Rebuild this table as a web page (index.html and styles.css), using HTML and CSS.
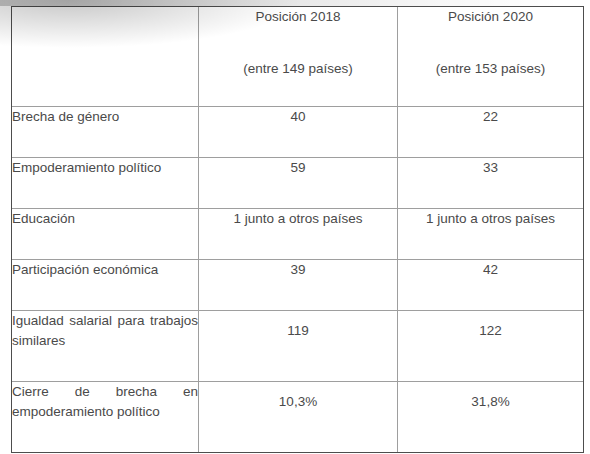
FILE: index.html
```html
<!DOCTYPE html>
<html lang="es">
<head>
<meta charset="utf-8">
<title>Tabla</title>
<link rel="stylesheet" href="styles.css">
</head>
<body>
<div class="page">
  <table class="data">
    <colgroup>
      <col class="c1"><col class="c2"><col class="c3">
    </colgroup>
    <tr class="head">
      <td class="label"></td>
      <td class="num"><p class="h1">Posición 2018</p><p class="h2">(entre 149 países)</p></td>
      <td class="num"><p class="h1">Posición 2020</p><p class="h2">(entre 153 países)</p></td>
    </tr>
    <tr>
      <td class="label"><p>Brecha de género</p></td>
      <td class="num"><p>40</p></td>
      <td class="num"><p>22</p></td>
    </tr>
    <tr>
      <td class="label"><p>Empoderamiento político</p></td>
      <td class="num"><p>59</p></td>
      <td class="num"><p>33</p></td>
    </tr>
    <tr>
      <td class="label"><p>Educación</p></td>
      <td class="num"><p>1 junto a otros países</p></td>
      <td class="num"><p>1 junto a otros países</p></td>
    </tr>
    <tr>
      <td class="label"><p>Participación económica</p></td>
      <td class="num"><p>39</p></td>
      <td class="num"><p>42</p></td>
    </tr>
    <tr>
      <td class="label"><p>Igualdad salarial para trabajos similares</p></td>
      <td class="num"><p>119</p></td>
      <td class="num"><p>122</p></td>
    </tr>
    <tr class="last">
      <td class="label"><p>Cierre de brecha en empoderamiento político</p></td>
      <td class="num"><p>10,3%</p></td>
      <td class="num"><p>31,8%</p></td>
    </tr>
  </table>
  <div class="shade"></div>
</div>
</body>
</html>
```
FILE: styles.css
```css
html, body {
  margin: 0;
  padding: 0;
  background: #fff;
}
.page {
  position: relative;
  width: 590px;
  height: 454px;
  overflow: hidden;
  padding: 6px 0 0 11px;
  box-sizing: border-box;
}
.data {
  border-collapse: separate;
  border-spacing: 0;
  border: 1px solid #4d4d4d;
  table-layout: fixed;
  width: 573px;
  font-family: "Liberation Sans", Arial, sans-serif;
  font-size: 13.5px;
  color: #4a4a4a;
}
.c1 { width: 187px; }
.c2 { width: 199px; }
.c3 { width: 185px; }
.data td {
  padding: 0;
  vertical-align: middle;
  border-right: 1px solid #9e9e9e;
  border-bottom: 1px solid #9e9e9e;
}
.data td:last-child { border-right: none; }
.data tr.last td { border-bottom: none; }
.data p {
  margin: 0 0 30px;
  line-height: 20px;
}
.label { text-align: justify; }
.num { text-align: center; }
.head .h1 { margin-bottom: 32px; }
.head .h2 { margin-bottom: 27px; }
.shade {
  position: absolute;
  left: 0;
  top: 0;
  width: 590px;
  height: 70px;
  pointer-events: none;
  background:
    radial-gradient(ellipse 230px 48px at 70px 0, rgba(0,0,0,0.22), rgba(0,0,0,0) 100%),
    linear-gradient(to right, rgba(0,0,0,0.2), rgba(0,0,0,0.1) 45%, rgba(0,0,0,0.03) 75%, rgba(0,0,0,0) 95%) top left / 100% 6px no-repeat;
}
```
